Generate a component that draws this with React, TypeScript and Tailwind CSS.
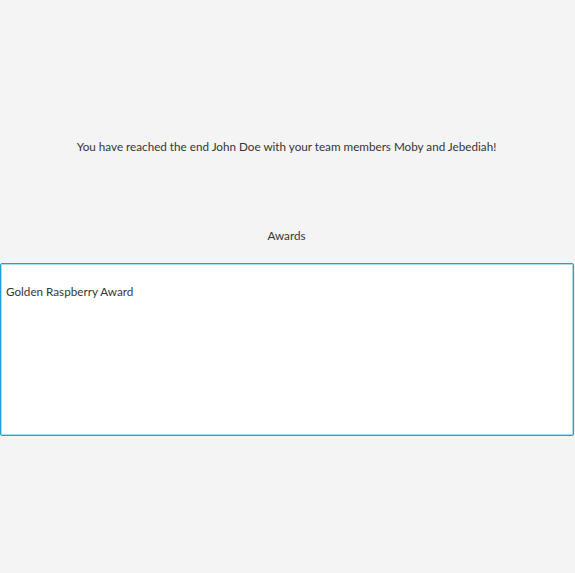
export default function App() {
  return (
    <div className="w-[575px] h-[573px] bg-[#f4f4f4] flex flex-col text-[#353535]" style={{ fontFamily: 'Lato, "Open Sans", sans-serif' }}>
      <div className="h-[138px]" />
      <div className="w-[573px] h-[18px] flex items-center justify-center text-[11.7px] leading-none">You have reached the end John Doe with your team members Moby and Jebediah!</div>
      <div className="h-[71px]" />
      <div className="w-[573px] h-[18px] flex items-center justify-center text-[11.7px] leading-none">Awards</div>
      <div className="h-[18px]" />
      <div className="w-[574px] h-[173px] bg-white border border-[#1fa0d6] shadow-[0_0_0_1px_#a8dcf0_inset] rounded-[2px] px-[5px] pt-[22px] text-[11.7px] leading-none">
        Golden Raspberry Award
      </div>
    </div>
  );
}
